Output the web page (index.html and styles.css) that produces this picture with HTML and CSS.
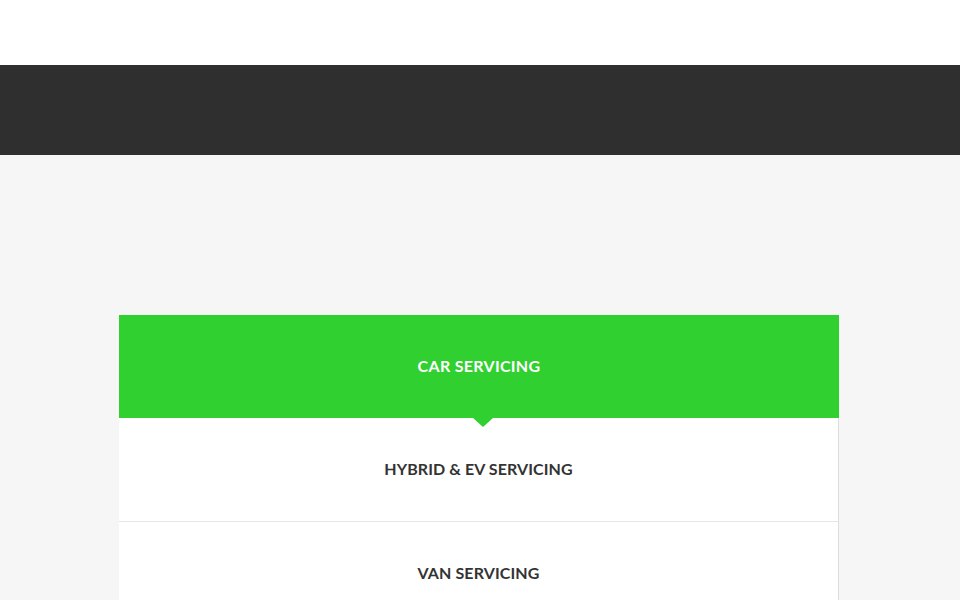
FILE: index.html
```html
<!DOCTYPE html>
<html>
<head>
<meta charset="utf-8">
<link rel="stylesheet" href="styles.css">
</head>
<body>
<header class="top"></header>
<div class="band"></div>
<main class="content">
  <div class="tabs">
    <div class="tab active">CAR SERVICING</div>
    <div class="tab">HYBRID &amp; EV SERVICING</div>
    <div class="tab">VAN SERVICING</div>
  </div>
</main>
</body>
</html>
```
FILE: styles.css
```css
html, body {
  margin: 0;
  padding: 0;
  height: 100%;
  overflow: hidden;
}
body {
  font-family: Lato, "Open Sans", sans-serif;
  background: #f6f6f6;
}
.top {
  height: 65px;
  background: #ffffff;
}
.band {
  height: 90px;
  background: #2f2f2f;
}
.content {
  padding: 160px 2px 0 0;
}
.tabs {
  width: 720px;
  margin: 0 auto;
  display: flex;
  flex-direction: column;
}
.tab {
  height: 104px;
  padding-bottom: 2px;
  display: flex;
  align-items: center;
  justify-content: center;
  background: #ffffff;
  color: #333333;
  font-size: 16px;
  font-weight: 700;
  letter-spacing: 0.1px;
  box-sizing: border-box;
  border-right: 1px solid #dddddd;
  border-bottom: 1px solid #e6e6e6;
  position: relative;
}
.tab.active {
  height: 103px;
  background: #2fd02f;
  color: #ffffff;
  border: none;
  letter-spacing: 0.3px;
  z-index: 2;
}
.tab.active::after {
  content: "";
  position: absolute;
  left: 50%;
  bottom: -9px;
  margin-left: -6px;
  border-left: 10px solid transparent;
  border-right: 10px solid transparent;
  border-top: 9px solid #2fd02f;
}
```
